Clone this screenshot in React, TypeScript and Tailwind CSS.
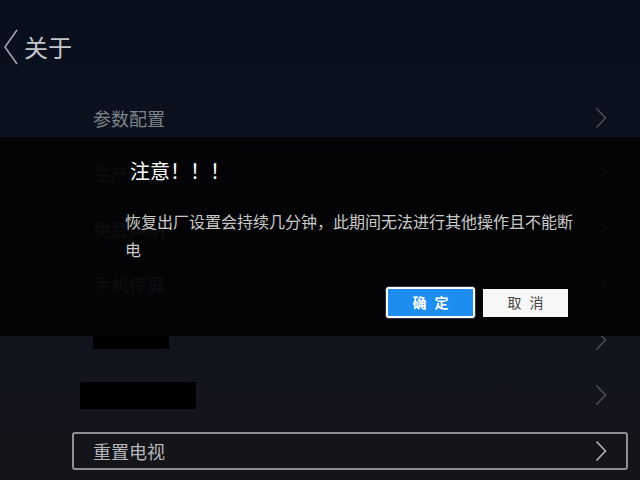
import React from "react";

const font = { fontFamily: '"Noto Sans CJK SC", "Noto Sans", sans-serif' };

function Chevron({ className = "" }: { className?: string }) {
  return (
    <svg width="12" height="22" viewBox="0 0 12 22" className={className} fill="none">
      <path d="M1.5 1.5 L10.5 11 L1.5 20.5" stroke="currentColor" strokeWidth="1.5" />
    </svg>
  );
}

const rows = ["参数配置", "生产配置", "免费声明", "手机传屏", "", "", "重置电视"];

export default function App() {
  return (
    <div
      className="relative w-[640px] h-[480px] overflow-hidden bg-gradient-to-b from-[#090e1c] via-[#0f1421] to-[#151419]"
      style={font}
    >
      {/* Header */}
      <div className="flex items-center h-[90px] pt-[4px] pl-[3px]">
        <svg width="16" height="36" viewBox="0 0 16 36" fill="none" className="text-[#a4a8b0]">
          <path d="M14 1 L2 18 L14 35" stroke="currentColor" strokeWidth="1.5" />
        </svg>
        <span className="ml-[5px] text-[24px] leading-none text-[#c4c7cc]">关于</span>
      </div>

      {/* List */}
      <div className="flex flex-col">
        {rows.map((label, i) => {
          const focused = i === rows.length - 1;
          return (
            <div key={i} className="h-[55.5px] flex items-center ml-[72px] mr-[12px]">
              <div
                className={
                  focused
                    ? "flex-1 h-[38px] flex items-center justify-between pl-[19px] pr-[19px] border-2 border-[#8e9094] rounded-[3px]"
                    : "flex-1 h-[38px] flex items-center justify-between pl-[21px] pr-[21px]"
                }
              >
                {i === 4 ? (
                  <div className="w-[76px] h-[18px] bg-black" />
                ) : i === 5 ? (
                  <div className="w-[116px] h-[27px] bg-black -ml-[13px]" />
                ) : (
                  <span
                    className={
                      focused
                        ? "text-[18px] leading-none text-[#b4b6ba]"
                        : "text-[18px] leading-none text-[#7f838b]"
                    }
                  >
                    {label}
                  </span>
                )}
                <Chevron className={focused ? "text-[#b8babd]" : "text-[#4a4e58]"} />
              </div>
            </div>
          );
        })}
      </div>

      {/* Dialog overlay */}
      <div className="absolute left-0 right-0 top-[137px] h-[199px] bg-[#030305]/[0.92]">
        <div className="pl-[130px] pt-[21px] text-[20px] leading-[26px] text-white">注意！！！</div>
        <div className="ml-[125px] mt-[23px] w-[455px] text-[16px] leading-[28px] text-[#c9c9c9]">
          恢复出厂设置会持续几分钟，此期间无法进行其他操作且不能断电
        </div>
        <div className="flex items-center ml-[386px] mt-[24px] gap-[8px]">
          <div className="w-[89px] h-[31px] flex items-center justify-center bg-[#1d8df0] border-2 border-white rounded-[2px] outline outline-1 outline-[#2a3340] text-[14px] font-bold tracking-[8px] pl-[8px] text-white">
            确定
          </div>
          <div className="w-[85px] h-[28px] flex items-center justify-center bg-[#f7f7f7] text-[14px] tracking-[8px] pl-[8px] text-[#454545]">
            取消
          </div>
        </div>
      </div>
    </div>
  );
}
